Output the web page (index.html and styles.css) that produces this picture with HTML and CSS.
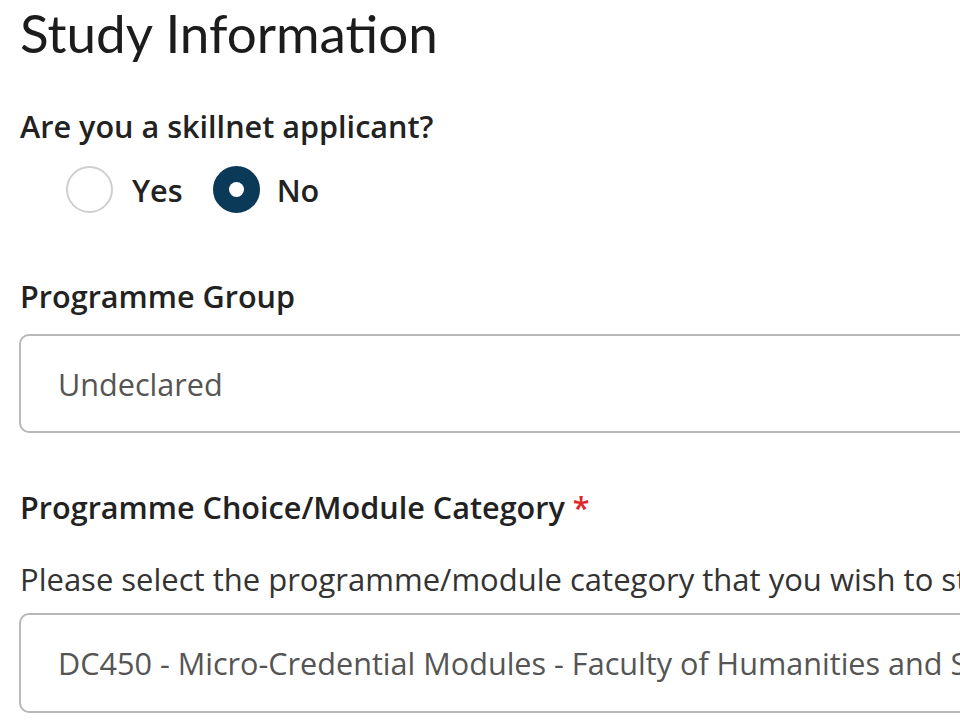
FILE: index.html
```html
<!DOCTYPE html>
<html lang="en">
<head>
<meta charset="utf-8">
<link rel="stylesheet" href="styles.css">
</head>
<body>
<main class="page">
  <h1 class="title">Study Information</h1>
  <section class="field field-radio">
    <div class="label">Are you a skillnet applicant?</div>
    <div class="radios">
      <label class="radio"><span class="dot"></span><span class="radio-text">Yes</span></label>
      <label class="radio checked"><span class="dot"></span><span class="radio-text">No</span></label>
    </div>
  </section>
  <section class="field field-group">
    <div class="label">Programme Group</div>
    <div class="input"><span class="value">Undeclared</span></div>
  </section>
  <section class="field field-choice">
    <div class="label">Programme Choice/Module Category <span class="req">*</span></div>
    <div class="help">Please select the programme/module category that you wish to study</div>
    <div class="input input-choice"><span class="value">DC450 - Micro-Credential Modules - Faculty of Humanities and Social Sciences</span></div>
  </section>
</main>
</body>
</html>
```
FILE: styles.css
```css
html, body {
  margin: 0;
  padding: 0;
  background: #ffffff;
  overflow: hidden;
}
.page {
  padding: 0 0 0 20px;
  width: 1400px;
  font-family: "Open Sans", "Noto Sans", sans-serif;
  color: #222;
}
.title {
  font-family: Lato, "Noto Sans", sans-serif;
  font-weight: 400;
  font-size: 53px;
  line-height: 65px;
  margin: 0;
  color: #1c1c1c;
}
.label {
  font-size: 30.6px;
  font-weight: 600;
  line-height: 42px;
  color: #222;
  white-space: nowrap;
}
.field-radio {
  margin-top: 40px;
}
.field-group {
  margin-top: 62px;
}
.field-choice {
  margin-top: 53px;
}
.req {
  color: #e0262b;
}
.radios {
  display: flex;
  align-items: center;
  padding-left: 46px;
  margin-top: 19px;
}
.radio {
  display: flex;
  align-items: center;
  gap: 19px;
  font-size: 30.6px;
  font-weight: 600;
  line-height: 42px;
}
.radio + .radio {
  margin-left: 30px;
}
.radio.checked {
  gap: 17px;
}
.dot {
  width: 47px;
  height: 47px;
  box-sizing: border-box;
  border: 2px solid #cfcfcf;
  border-radius: 50%;
  display: flex;
  align-items: center;
  justify-content: center;
}
.checked .dot {
  background: #0b3a59;
  border-color: #0b3a59;
}
.checked .dot::after {
  content: "";
  width: 15px;
  height: 15px;
  border-radius: 50%;
  background: #fff;
}
.help {
  font-size: 31px;
  line-height: 42px;
  color: #333;
  margin-top: 30px;
  white-space: nowrap;
}
.input {
  margin-top: 17px;
  margin-left: -1px;
  height: 99px;
  box-sizing: border-box;
  border: 2px solid #b8b8b8;
  border-radius: 10px;
  display: flex;
  align-items: center;
  padding-left: 37px;
  white-space: nowrap;
}
.input-choice {
  margin-top: 13px;
  height: 100px;
}
.value {
  font-size: 30.6px;
  line-height: 42px;
  color: #555;
}
```
